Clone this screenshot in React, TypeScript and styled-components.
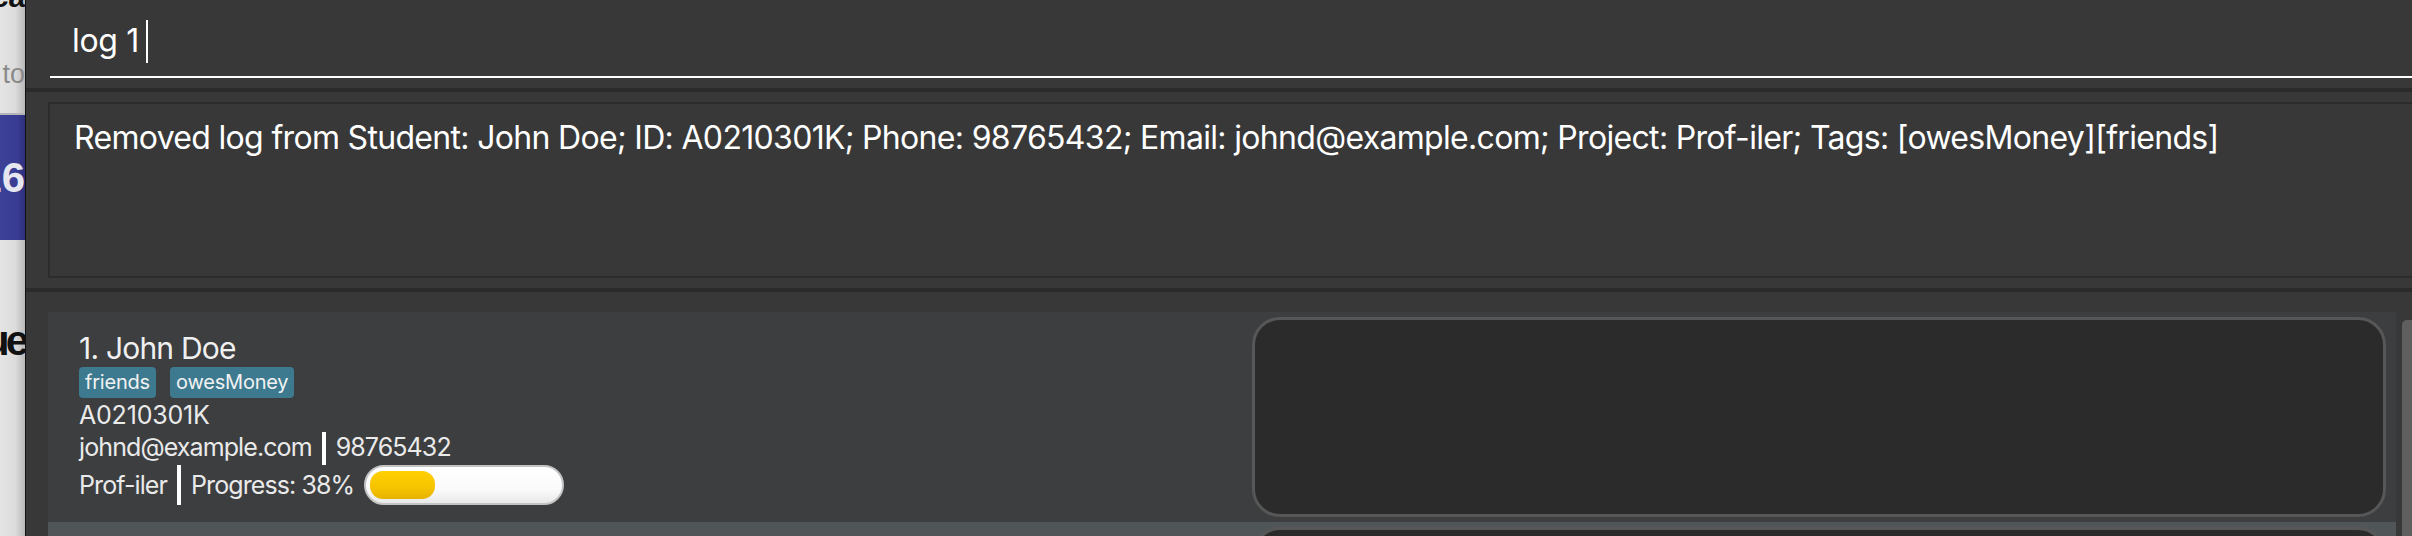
import React from 'react';
import styled, { createGlobalStyle } from 'styled-components';

interface Student {
  index: number;
  name: string;
  tags: string[];
  id: string;
  email: string;
  phone: string;
  project: string;
  progress: number;
}

const students: Student[] = [
  {
    index: 1,
    name: 'John Doe',
    tags: ['friends', 'owesMoney'],
    id: 'A0210301K',
    email: 'johnd@example.com',
    phone: '98765432',
    project: 'Prof-iler',
    progress: 38,
  },
  {
    index: 2,
    name: 'Bernice Yu',
    tags: ['colleagues'],
    id: 'A0234567B',
    email: 'berniceyu@example.com',
    phone: '99272758',
    project: 'Prof-iler',
    progress: 20,
  },
];

const GlobalStyle = createGlobalStyle`
  html, body {
    margin: 0;
    padding: 0;
    background: #383838;
    overflow: hidden;
  }
  body {
    font-family: Inter, "Noto Sans", sans-serif;
  }
`;

const Screen = styled.div`
  display: flex;
  width: 2412px;
  height: 536px;
  overflow: hidden;
`;

/* the window sitting behind, only its right edge shows */
const BackWindow = styled.div`
  width: 25px;
  flex: none;
  display: flex;
  flex-direction: column;
  background: linear-gradient(90deg, #e4e4e4 0%, #dcdcdc 60%, #b9b9b9 100%);
  border-right: 1px solid #111;
  font-family: "Liberation Sans", Arial, sans-serif;
  overflow: hidden;
`;

const BackRow = styled.div<{ $h: number; $bg?: string; $color: string; $size: number; $weight?: number; $pad?: number; $track?: number }>`
  height: ${(p) => p.$h}px;
  flex: none;
  display: flex;
  justify-content: flex-end;
  align-items: flex-start;
  padding-top: ${(p) => p.$pad ?? 0}px;
  box-sizing: border-box;
  white-space: nowrap;
  overflow: hidden;
  background: ${(p) => p.$bg ?? 'transparent'};
  color: ${(p) => p.$color};
  font-size: ${(p) => p.$size}px;
  font-weight: ${(p) => p.$weight ?? 400};
  letter-spacing: ${(p) => p.$track ?? 0}px;
  line-height: 1;
`;

const BackFill = styled.div`
  flex: 1;
`;

const Main = styled.div`
  flex: 1;
  display: flex;
  flex-direction: column;
  background: #383838;
  min-width: 0;
`;

const CommandBar = styled.div`
  height: 88px;
  flex: none;
  padding-left: 24px;
  box-sizing: border-box;
`;

const CommandField = styled.div`
  height: 78px;
  box-sizing: border-box;
  border-bottom: 2px solid #ffffff;
  display: flex;
  align-items: flex-start;
  padding: 21px 0 0 22px;
  color: #ffffff;
  font-size: 32px;
  line-height: 40px;
  letter-spacing: -0.3px;
`;

const Caret = styled.span`
  width: 2px;
  height: 43px;
  margin: -1px 0 0 7px;
  background: #ffffff;
`;

const Divider = styled.div`
  height: 4px;
  flex: none;
  background: #2b2b2b;
`;

const ResultPane = styled.div`
  height: 196px;
  flex: none;
  padding: 10px 0 10px 22px;
  box-sizing: border-box;
  overflow: hidden;
`;

const ResultBox = styled.div`
  height: 100%;
  margin-right: -40px;
  box-sizing: border-box;
  border: 2px solid #2c2c2c;
  padding: 14px 24px;
  color: #ffffff;
  font-size: 32px;
  line-height: 40px;
  letter-spacing: -0.68px;
  white-space: nowrap;
`;

const ListPane = styled.div`
  flex: 1;
  display: flex;
  padding: 20px 0 0 22px;
  overflow: hidden;
`;

const CardColumn = styled.div`
  flex: 1;
  display: flex;
  flex-direction: column;
`;

const ScrollTrack = styled.div`
  width: 16px;
  flex: none;
  display: flex;
  justify-content: flex-end;
  padding-top: 8px;
`;

const ScrollThumb = styled.div`
  width: 10px;
  height: 400px;
  background: #5f5f5f;
  border-radius: 5px 0 0 0;
`;

const Card = styled.div<{ $alt?: boolean }>`
  height: 210px;
  flex: none;
  display: grid;
  grid-template-columns: 1204px 1fr;
  padding: 5px 10px 5px 0;
  box-sizing: border-box;
  background: ${(p) => (p.$alt ? '#505558' : '#3c3e40')};
`;

const Details = styled.div`
  display: flex;
  flex-direction: column;
  padding: 13px 0 0 31px;
  color: #eaeaea;
`;

const Title = styled.div`
  font-size: 30px;
  line-height: 36px;
  letter-spacing: -0.8px;
  color: #f0f0f0;
`;

const TagRow = styled.div`
  display: flex;
  gap: 14px;
  margin-top: 1px;
`;

const Tag = styled.span`
  height: 31px;
  padding: 0 6px;
  border-radius: 4px;
  background: #3d7a8f;
  color: #f2f2f2;
  font-size: 20px;
  line-height: 31px;
  letter-spacing: -0.2px;
`;

const Line = styled.div<{ $h?: number }>`
  display: flex;
  align-items: center;
  gap: 10px;
  height: ${(p) => p.$h ?? 28}px;
  font-size: 25px;
  line-height: 28px;
  letter-spacing: -0.9px;
  white-space: nowrap;
`;

const IdLine = styled(Line)`
  margin-top: 3px;
  letter-spacing: -0.2px;
`;

const EmailLine = styled(Line)`
  align-items: flex-start;
`;

const Text = styled.span<{ $top?: number }>`
  margin-top: ${(p) => p.$top ?? 0}px;
`;

const Bar = styled.span<{ $h: number; $top?: number }>`
  width: 4px;
  height: ${(p) => p.$h}px;
  margin-top: ${(p) => p.$top ?? 0}px;
  background: #ffffff;
`;

const ProgressTrack = styled.div`
  width: 200px;
  height: 40px;
  box-sizing: border-box;
  border: 2px solid #c4c4c4;
  border-radius: 20px;
  background: linear-gradient(180deg, #ffffff 0%, #fbfbfb 60%, #e9e9e9 100%);
  padding: 4px;
  display: flex;
`;

const ProgressFill = styled.div`
  height: 100%;
  border-radius: 13px;
  background: linear-gradient(180deg, #ffd000 0%, #f6c400 60%, #e6b200 100%);
`;

const LogPanel = styled.div`
  border: 3px solid #575757;
  border-radius: 28px;
  background: #2b2b2b;
`;

const StudentCard: React.FC<{ student: Student; alt?: boolean }> = ({ student, alt }) => (
  <Card $alt={alt}>
    <Details>
      <Title>
        {student.index}. {student.name}
      </Title>
      <TagRow>
        {student.tags.map((t) => (
          <Tag key={t}>{t}</Tag>
        ))}
      </TagRow>
      <IdLine>{student.id}</IdLine>
      <EmailLine $h={36}>
        <Text $top={4}>{student.email}</Text>
        <Bar $h={33} $top={3} />
        <Text $top={4}>{student.phone}</Text>
      </EmailLine>
      <Line $h={40}>
        <Text>{student.project}</Text>
        <Bar $h={40} />
        <Text>Progress: {student.progress}%</Text>
        <ProgressTrack>
          {/* fill width taken from the student's progress */}
          <ProgressFill style={{ width: `${Math.round((student.progress / 100) * 170)}px` }} />
        </ProgressTrack>
      </Line>
    </Details>
    <LogPanel />
  </Card>
);

export default function App() {
  const s = students[0];
  const result = `Removed log from Student: ${s.name}; ID: ${s.id}; Phone: ${s.phone}; Email: ${s.email}; Project: ${s.project}; Tags: [owesMoney][friends]`;

  return (
    <>
      <GlobalStyle />
      <Screen>
        <BackWindow>
          <BackRow $h={33} $color="#111" $size={30} $weight={700} $pad={0}>
            <span style={{ marginTop: -18 }}>Educa</span>
          </BackRow>
          <BackRow $h={80} $color="#8a8a8a" $size={27} $pad={28}>
            Add to
          </BackRow>
          <BackRow $h={2} $bg="#b5b5b5" $color="#000" $size={1} />
          <BackRow $h={125} $bg="linear-gradient(90deg,#3d4197 0%,#383c93 70%,#2c2f78 100%)" $color="#e6e6f0" $size={42} $weight={700} $pad={42}>
            16
          </BackRow>
          <BackRow $h={120} $color="#111" $size={42} $weight={700} $pad={80} $track={-4}>
            Que
          </BackRow>
          <BackFill />
        </BackWindow>
        <Main>
          <CommandBar>
            <CommandField>
              <span>log 1</span>
              <Caret />
            </CommandField>
          </CommandBar>
          <Divider />
          <ResultPane>
            <ResultBox>{result}</ResultBox>
          </ResultPane>
          <Divider />
          <ListPane>
            <CardColumn>
              {students.map((st, i) => (
                <StudentCard key={st.id} student={st} alt={i % 2 === 1} />
              ))}
            </CardColumn>
            <ScrollTrack>
              <ScrollThumb />
            </ScrollTrack>
          </ListPane>
        </Main>
      </Screen>
    </>
  );
}
